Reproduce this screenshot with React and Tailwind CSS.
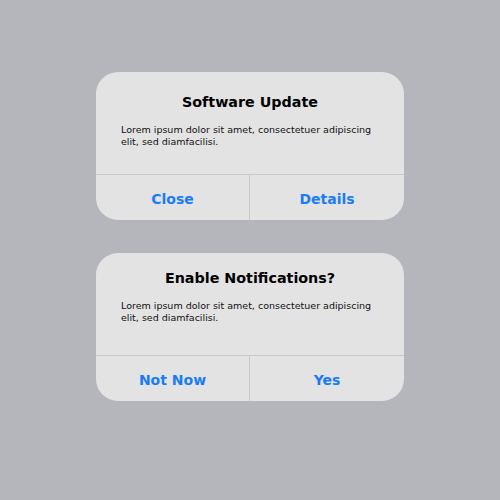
const alerts = [
  {
    title: 'Software Update',
    body: 'Lorem ipsum dolor sit amet, consectetuer adipiscing elit, sed diamfacilisi.',
    actions: ['Close', 'Details'],
    pad: 'pt-[20px]',
  },
  {
    title: 'Enable Notifications?',
    body: 'Lorem ipsum dolor sit amet, consectetuer adipiscing elit, sed diamfacilisi.',
    actions: ['Not Now', 'Yes'],
    pad: 'pt-[15px]',
  },
];

function AlertCard({ title, body, actions, pad }) {
  return (
    <div className="w-[308px] rounded-[22px] bg-[#e3e3e4] overflow-hidden">
      <div className={`h-[102px] px-[25px] ${pad}`}>
        <h2 className="text-center text-[14.3px] font-bold leading-[20px] text-black">{title}</h2>
        <p className="mt-[12px] text-[9.5px] leading-[11.5px] text-[#111]">{body}</p>
      </div>
      <div className="grid h-[46px] grid-cols-2 border-t border-[#c9c9cb]">
        {actions.map((label, i) => (
          <button
            key={label}
            className={`flex items-center justify-center pt-[3px] text-[14px] font-semibold text-[#1a7cf5] ${
              i === 0 ? 'border-r border-[#c9c9cb]' : ''
            }`}
          >
            {label}
          </button>
        ))}
      </div>
    </div>
  );
}

export default function App() {
  return (
    <div
      className="flex h-[500px] w-[500px] flex-col items-center gap-[33px] bg-[#b5b6bb] pt-[72px]"
      style={{ fontFamily: '"DejaVu Sans", sans-serif' }}
    >
      {alerts.map((a) => (
        <AlertCard key={a.title} {...a} />
      ))}
    </div>
  );
}
